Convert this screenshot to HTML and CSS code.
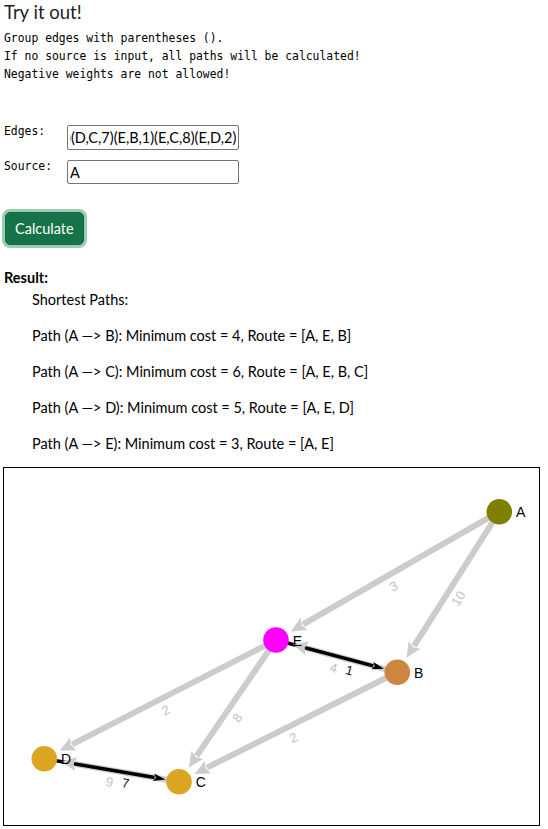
FILE: index.html
```html
<!DOCTYPE html>
<html lang="en">
<head>
<meta charset="utf-8">
<title>Try it out!</title>
<link rel="stylesheet" href="styles.css">
</head>
<body>
<main class="page">
  <h1 class="title">Try it out!</h1>
  <pre class="notes">Group edges with parentheses ().
If no source is input, all paths will be calculated!
Negative weights are not allowed!</pre>

  <form class="form">
    <label class="form-label" for="edges">Edges:</label>
    <input class="form-input" id="edges" type="text" value="(A,B,10)(A,E,3)(B,C,2)(B,E,4)(C,D,9)(D,C,7)(E,B,1)(E,C,8)(E,D,2)">
    <label class="form-label" for="source">Source:</label>
    <input class="form-input form-input-short" id="source" type="text" value="A">
  </form>

  <button class="btn-calc" type="button">Calculate</button>

  <section class="result">
    <div class="result-title">Result:</div>
    <div class="result-body">
      <p>Shortest Paths:</p>
      <p>Path (A —&gt; B): Minimum cost = 4, Route = [A, E, B]</p>
      <p>Path (A —&gt; C): Minimum cost = 6, Route = [A, E, B, C]</p>
      <p>Path (A —&gt; D): Minimum cost = 5, Route = [A, E, D]</p>
      <p>Path (A —&gt; E): Minimum cost = 3, Route = [A, E]</p>
    </div>
  </section>

  <div class="graph">
    <svg id="graph" class="graph-svg" width="535" height="357" viewBox="0 0 535 357" xmlns="http://www.w3.org/2000/svg"></svg>
  </div>
</main>
<script src="script.js"></script>
</body>
</html>
```

FILE: styles.css
```css
* { box-sizing: border-box; }

body {
  margin: 0;
  font-family: "Lato", "Open Sans", sans-serif;
  color: #212529;
  background: #fff;
}

.page {
  padding: 0 4px;
}

.title {
  margin: 0;
  font-size: 18.5px;
  font-weight: 400;
  line-height: 24px;
  color: #222;
}

.notes {
  margin: 5px 0 0;
  font-family: "DejaVu Sans Mono", monospace;
  font-size: 11.4px;
  line-height: 18px;
  color: #000;
}

.form {
  margin-top: 42px;
  display: grid;
  grid-template-columns: 63px 172px;
  row-gap: 10px;
  align-items: start;
}

.form-label {
  font-family: "DejaVu Sans Mono", monospace;
  font-size: 11.4px;
  line-height: 12px;
  color: #000;
}

.form-input {
  width: 172px;
  height: 25px;
  margin: 0;
  padding: 1px 2px;
  border: 1px solid #767676;
  border-radius: 2px;
  font-family: "Lato", sans-serif;
  font-size: 14.5px;
  color: #000;
  background: #fff;
}

.form-input-short {
  height: 24px;
}

.btn-calc {
  display: block;
  margin: 28px 0 0 1px;
  padding: 5px 9px;
  border: 1px solid #146c43;
  border-radius: 5px;
  background: #157347;
  color: #fff;
  font-family: "Lato", sans-serif;
  font-size: 14.5px;
  line-height: 21px;
  box-shadow: 0 0 0 3px rgba(60, 153, 110, 0.5);
  cursor: pointer;
}

.result {
  margin-top: 23px;
  font-size: 14.5px;
  line-height: 20px;
  color: #000;
}

.result-title {
  font-weight: 700;
}

.result-body {
  margin-top: 2px;
  padding-left: 28px;
  display: flex;
  flex-direction: column;
  gap: 16px;
}

.result-body p {
  margin: 0;
}

.graph {
  margin: 13px 0 0 -1px;
  width: 537px;
  height: 359px;
  border: 1px solid #000;
  background: #fff;
}

.graph-svg {
  display: block;
}

.edge-line { fill: none; stroke-linecap: butt; }
.edge-gray { stroke: #cccccc; stroke-width: 6; }
.edge-black { stroke: #000; stroke-width: 3.5; }
.arrow-gray { fill: #cccccc; }
.arrow-black { fill: #000; }
.edge-label {
  font-family: "Liberation Sans", Arial, sans-serif;
  font-size: 13px;
}
.edge-label-gray { fill: #c2c2c2; }
.edge-label-black { fill: #111; }
.node-label {
  font-family: "Liberation Sans", Arial, sans-serif;
  font-size: 14px;
  fill: #000;
}
```

FILE: script.js
```js
(function () {
  var edgesInput = document.getElementById('edges');
  edgesInput.scrollLeft = edgesInput.scrollWidth;

  var NS = 'http://www.w3.org/2000/svg';
  var svg = document.getElementById('graph');
  var R = 12.8;

  var nodes = {
    A: { x: 499.3, y: 511.7, color: '#808000' },
    E: { x: 276, y: 640, color: '#ff00ff' },
    B: { x: 397.3, y: 672.3, color: '#cd853f' },
    D: { x: 44.3, y: 758.7, color: '#daa520' },
    C: { x: 179, y: 781.7, color: '#daa520' }
  };

  var edges = [
    ['A', 'B', 10, false], ['A', 'E', 3, false], ['B', 'C', 2, false],
    ['B', 'E', 4, false], ['C', 'D', 9, false], ['D', 'C', 7, true],
    ['E', 'B', 1, true], ['E', 'C', 8, false], ['E', 'D', 2, false]
  ];

  function el(name, attrs, parent) {
    var e = document.createElementNS(NS, name);
    for (var k in attrs) e.setAttribute(k, attrs[k]);
    if (parent) parent.appendChild(e);
    return e;
  }

  var root = el('g', { transform: 'translate(-4 -468)' }, svg);
  var gLines = el('g', {}, root);
  var gArrows = el('g', {}, root);
  var gLabels = el('g', {}, root);
  var gNodes = el('g', {}, root);

  edges.forEach(function (ed) {
    var p = nodes[ed[0]], q = nodes[ed[1]], hot = ed[3];
    var dx = q.x - p.x, dy = q.y - p.y, len = Math.sqrt(dx * dx + dy * dy);
    var ux = dx / len, uy = dy / len;
    var gap = hot ? 1 : 4.5;
    var alen = hot ? 12 : 15;
    var half = hot ? 3.8 : 7;
    var tx = q.x - ux * (R + gap), ty = q.y - uy * (R + gap);
    var bx = tx - ux * alen, by = ty - uy * alen;
    el('line', {
      x1: p.x.toFixed(2), y1: p.y.toFixed(2), x2: (bx + ux).toFixed(2), y2: (by + uy).toFixed(2),
      'class': 'edge-line ' + (hot ? 'edge-black' : 'edge-gray')
    }, gLines);
    var nx = -uy, ny = ux;
    var pts = [
      [tx, ty],
      [bx + nx * half, by + ny * half],
      [bx + ux * 2.5, by + uy * 2.5],
      [bx - nx * half, by - ny * half]
    ].map(function (pt) { return pt[0].toFixed(2) + ',' + pt[1].toFixed(2); }).join(' ');
    el('polygon', { points: pts, 'class': hot ? 'arrow-black' : 'arrow-gray' }, gArrows);

    var ang = Math.atan2(dy, dx);
    if (dx < 0) ang += Math.PI;
    var cx = Math.cos(ang), sx = Math.sin(ang);
    var mx = (p.x + q.x) / 2, my = (p.y + q.y) / 2;
    var along = hot ? 16 : 0, off = hot ? 10.5 : 12;
    var lx = mx + cx * along - sx * off, ly = my + sx * along + cx * off;
    var t = el('text', {
      x: lx.toFixed(2), y: ly.toFixed(2),
      'text-anchor': 'middle', 'dominant-baseline': 'central',
      transform: 'rotate(' + (ang * 180 / Math.PI).toFixed(2) + ' ' + lx.toFixed(2) + ' ' + ly.toFixed(2) + ')',
      'class': 'edge-label ' + (hot ? 'edge-label-black' : 'edge-label-gray')
    }, gLabels);
    t.textContent = String(ed[2]);
  });

  Object.keys(nodes).forEach(function (id) {
    var n = nodes[id];
    el('circle', { cx: n.x, cy: n.y, r: R, fill: n.color }, gNodes);
    var t = el('text', {
      x: (n.x + 16.7).toFixed(2), y: (n.y + 0.5).toFixed(2),
      'dominant-baseline': 'central', 'class': 'node-label'
    }, gNodes);
    t.textContent = id;
  });
})();
```
